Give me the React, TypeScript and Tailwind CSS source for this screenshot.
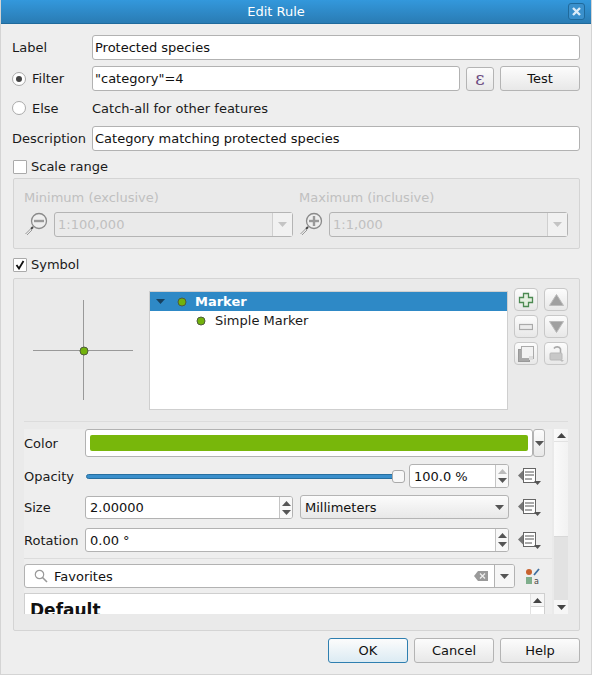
import React from 'react';

const inputCls = 'flex items-center bg-white border border-[#b2b2b2] rounded-[3px] px-[2px] text-[#111] whitespace-nowrap overflow-hidden';
const btnBase = 'flex items-center justify-center border rounded-[3px] bg-gradient-to-b from-[#fcfcfc]';
const btnCls = `${btnBase} border-[#b4b4b4] to-[#e8e8e8] text-[#111]`;

function Arrow({ down = true, color = '#555', w = 9 }: { down?: boolean; color?: string; w?: number }) {
    return (
        <svg width={w} height={5} viewBox="0 0 9 5" className="shrink-0">
            <path d={down ? 'M0 0H9L4.5 5Z' : 'M0 5H9L4.5 0Z'} fill={color} />
        </svg>
    );
}

function Spin({ upColor = '#555' }: { upColor?: string }) {
    return (
        <div className="ml-auto w-[13px] -mr-[2px] h-full border-l border-[#c4c4c4] flex flex-col items-center justify-center gap-[4px] bg-[#f8f8f8] shrink-0">
            <Arrow down={false} color={upColor} />
            <Arrow />
        </div>
    );
}

function DataDefined() {
    return (
        <svg width={24} height={20} viewBox="0 0 24 20" className="shrink-0">
            <path d="M0 9.5L6 3.5V15.5Z" fill="#777" />
            <rect x="5.5" y="2.5" width="12" height="14" fill="#fff" stroke="#666" />
            <path d="M7 6H16M7 9H16M7 13H14" stroke="#555" />
            <path d="M16 15H23L19.5 19Z" fill="#555" />
        </svg>
    );
}

function Magnifier({ plus }: { plus?: boolean }) {
    return (
        <svg width={24} height={26} viewBox="0 0 24 26" className="shrink-0">
            <circle cx="15" cy="10" r="7.5" fill="#eee" stroke="#8a8a8a" strokeWidth="1.3" />
            <path d="M10 10H20" stroke="#999" strokeWidth="2.4" />
            {plus && <path d="M15 5V15" stroke="#999" strokeWidth="2.4" />}
            <path d="M9 16L7 18" stroke="#444" strokeWidth="2" />
            <path d="M6.5 18L1.5 23M8 19L3 24" stroke="#999" />
        </svg>
    );
}

function Dot({ size = 8 }: { size?: number }) {
    return (
        <svg width={size + 2} height={size + 2} viewBox="0 0 10 10" className="shrink-0">
            <circle cx="5" cy="5" r="4" fill="#72b20c" stroke="#4f5b3d" strokeWidth="1" />
        </svg>
    );
}

function ScaleCombo({ value, plus, wrap }: { value: string; plus?: boolean; wrap: string }) {
    return (
        <div className={`flex flex-col ${wrap}`}>
            <div className="h-[15px] text-[#c0c0c0]">{plus ? 'Maximum (inclusive)' : 'Minimum (exclusive)'}</div>
            <div className="flex items-center mt-[6px] gap-[6px]">
                <Magnifier plus={plus} />
                <div className="flex-1 h-[25px] flex items-center border border-[#b4b4b4] rounded-[3px] bg-[#eaeaea] text-[#c0c0c0] pl-[3px]">
                    {value}
                    <div className="ml-auto w-[20px] h-full border-l border-[#cfcfcf] bg-[#f1f1f1] flex items-center justify-center">
                        <Arrow color="#c4c4c4" />
                    </div>
                </div>
            </div>
        </div>
    );
}

function ToolButton({ children }: { children: React.ReactNode }) {
    return (
        <div className={`${btnBase} border-[#c8c8c8] to-[#e8e8e8] w-[24px] h-[23px] rounded-[4px]`}>
            {children}
        </div>
    );
}

function Arrow2({ down }: { down?: boolean }) {
    return (
        <svg width={15} height={12} viewBox="0 0 15 12">
            <path d={down ? 'M0.5 0.5H14.5L7.5 11.5Z' : 'M0.5 11.5H14.5L7.5 0.5Z'} fill="#a0a0a0" stroke="#bbb" />
        </svg>
    );
}

export default function App() {
    return (
        <div className="w-[592px] h-[675px] bg-[#eeeeee] flex flex-col text-[13px] leading-[15px] text-[#1a1a1a] font-['DejaVu_Sans',sans-serif] border-x border-b border-[#d4d4d4] overflow-hidden">
            <div className="h-[24px] -mx-[1px] pr-[40px] shrink-0 relative flex items-center justify-center text-white bg-gradient-to-b from-[#3398dc] to-[#2a7cb4] border-b border-[#1f6a9c]">
                Edit Rule
                <div className="absolute right-[7px] top-[3px] w-[17px] h-[17px] rounded-[3px] border border-[#1f6a9c] bg-[#3a90cc] flex items-center justify-center">
                    <svg width={11} height={11} viewBox="0 0 11 11">
                        <path d="M2 2L9 9M9 2L2 9" stroke="#dcecf8" strokeWidth="2.4" />
                    </svg>
                </div>
            </div>

            <div className="flex-1 flex flex-col pl-[11px] pr-[11px] pt-[11px]">
                <div className="flex items-center h-[25px]">
                    <span className="w-[80px]">Label</span>
                    <div className={`${inputCls} flex-1 h-full`}>Protected species</div>
                </div>
                <div className="flex items-center h-[25px] mt-[6px]">
                    <span className="w-[80px] flex items-center gap-[6px]">
                        <span className="w-[14px] h-[14px] rounded-full border border-[#aaa] bg-white flex items-center justify-center">
                            <span className="w-[6px] h-[6px] rounded-full bg-[#444]" />
                        </span>
                        Filter
                    </span>
                    <div className={`${inputCls} w-[368px] h-full`}>"category"=4</div>
                    <div className={`${btnBase} border-[#b4b4b4] to-[#e8e8e8] w-[28px] h-[24px] ml-[6px] font-['DejaVu_Serif',serif] text-[18px] text-[#6b4a80]`}>ε</div>
                    <div className={`${btnCls} w-[80px] h-[25px] ml-[6px]`}>Test</div>
                </div>
                <div className="flex items-center h-[24px] mt-[5px]">
                    <span className="w-[80px] flex items-center gap-[6px]">
                        <span className="w-[14px] h-[14px] rounded-full border border-[#aaa] bg-white" />
                        Else
                    </span>
                    Catch-all for other features
                </div>
                <div className="flex items-center h-[25px] mt-[6px]">
                    <span className="w-[80px]">Description</span>
                    <div className={`${inputCls} flex-1 h-full`}>Category matching protected species</div>
                </div>

                <div className="flex items-center h-[15px] mt-[8px] ml-[1px] gap-[4px]">
                    <span className="w-[14px] h-[14px] border border-[#aaa] bg-white rounded-[1px]" />
                    Scale range
                </div>
                <div className="h-[71px] mt-[4px] ml-[1px] border border-[#d4d4d4] rounded-[2px] bg-[#eaeaea] flex pt-[11px] pl-[10px] pr-[11px]">
                    <ScaleCombo value="1:100,000" wrap="w-[269px]" />
                    <ScaleCombo value="1:1,000" plus wrap="w-[269px] ml-[6px]" />
                </div>

                <div className="flex items-center h-[15px] mt-[8px] ml-[1px] gap-[4px]">
                    <span className="w-[14px] h-[14px] border border-[#aaa] bg-white rounded-[1px] flex items-center justify-center">
                        <svg width={10} height={10} viewBox="0 0 10 10">
                            <path d="M1.5 5L4 8.5L8.5 1" stroke="#111" strokeWidth="1.8" fill="none" />
                        </svg>
                    </span>
                    Symbol
                </div>
                <div className="h-[353px] mt-[6px] ml-[1px] border border-[#d4d4d4] rounded-[2px] bg-[#eaeaea] flex flex-col pl-[10px] pr-[11px] overflow-hidden">
                    <div className="flex h-[143px] shrink-0 border-b border-[#dcdcdc]">
                        <div className="w-[125px] pl-[9px] pt-[21px] shrink-0">
                            <svg width={100} height={100} viewBox="0 0 100 100">
                                <path d="M0 50.5H100M50.5 0V100" stroke="#999" />
                                <circle cx="51" cy="51" r="4" fill="#72b20c" stroke="#4f5b3d" />
                            </svg>
                        </div>
                        <div className="w-[359px] h-[119px] mt-[12px] bg-white border border-[#cfcfcf] flex flex-col">
                            <div className="h-[19px] bg-[#2e89c6] flex items-center text-white font-bold pl-[6px]">
                                <Arrow color="#17405e" />
                                <span className="ml-[12px]"><Dot /></span>
                                <span className="ml-[8px]">Marker</span>
                            </div>
                            <div className="h-[19px] flex items-center pl-[46px] gap-[9px]">
                                <Dot />
                                Simple Marker
                            </div>
                        </div>
                        <div className="grid grid-cols-[24px_24px] grid-rows-[23px_23px_23px] gap-x-[6px] gap-y-[4px] ml-[6px] mt-[9px] h-fit">
                            <ToolButton>
                                <svg width={16} height={16} viewBox="0 0 16 16">
                                    <path d="M5.5 1.5H10.5V5.5H14.5V10.5H10.5V14.5H5.5V10.5H1.5V5.5H5.5Z" fill="#e4efe0" stroke="#4c8a52" strokeWidth="1.3" />
                                </svg>
                            </ToolButton>
                            <ToolButton><Arrow2 /></ToolButton>
                            <ToolButton>
                                <svg width={14} height={8} viewBox="0 0 14 8">
                                    <rect x="0.5" y="1.5" width="13" height="5" fill="#ececec" stroke="#aaa" strokeWidth="1.2" />
                                </svg>
                            </ToolButton>
                            <ToolButton><Arrow2 down /></ToolButton>
                            <ToolButton>
                                <svg width={16} height={16} viewBox="0 0 16 16">
                                    <rect x="0.5" y="3.5" width="11" height="12" fill="#a8a8a8" stroke="#999" />
                                    <rect x="3.5" y="0.5" width="12" height="12" fill="#f2f2f2" stroke="#aaa" />
                                    <rect x="11" y="10" width="4" height="4" fill="#ddd" />
                                </svg>
                            </ToolButton>
                            <ToolButton>
                                <svg width={17} height={17} viewBox="0 0 17 17">
                                    <path d="M6 3.5A3.5 3 0 0 1 12.5 4V8" stroke="#aaa" strokeWidth="1.6" fill="none" />
                                    <rect x="2" y="8" width="12" height="7" rx="1" fill="#c8c8c8" stroke="#b8b8b8" />
                                    <path d="M12 15L16 15L14 17Z" fill="#bbb" />
                                </svg>
                            </ToolButton>
                        </div>
                    </div>

                    <div className="flex mt-[7px] h-[185px] shrink-0">
                        <div className="w-[528px] bg-[#eeeeee] flex flex-col shrink-0 overflow-hidden">
                            <div className="flex items-center h-[28px] shrink-0">
                                <span className="w-[61px]">Color</span>
                                <div className="w-[448px] h-full bg-white border border-[#b2b2b2] rounded-[3px] px-[4px] py-[5px] shrink-0">
                                    <div className="w-full h-full bg-[#78b70b] rounded-[2px]" />
                                </div>
                                <div className={`${btnCls} w-[12px] h-full`}><Arrow /></div>
                            </div>
                            <div className="flex items-center h-[24px] mt-[7px] shrink-0">
                                <span className="w-[62px]">Opacity</span>
                                <div className="w-[319px] flex items-center shrink-0">
                                    <div className="flex-1 h-[5px] bg-[#3a8fcb] border border-[#276f9f] rounded-full" />
                                    <div className="w-[13px] h-[13px] -ml-[3px] bg-[#f8f8f8] border border-[#aaa] rounded-[3px]" />
                                </div>
                                <div className={`${inputCls} w-[100px] h-full ml-[4px] pl-[4px]`}>
                                    100.0 %
                                    <Spin upColor="#bbb" />
                                </div>
                                <span className="ml-[9px]"><DataDefined /></span>
                            </div>
                            <div className="flex items-center h-[24px] mt-[7px] shrink-0">
                                <span className="w-[61px]">Size</span>
                                <div className={`${inputCls} w-[208px] h-[23px] self-end pl-[4px]`}>
                                    2.00000
                                    <Spin />
                                </div>
                                <div className={`${btnCls} !justify-between w-[209px] h-full ml-[7px] px-[4px]`}>
                                    Millimeters
                                    <Arrow />
                                </div>
                                <span className="ml-[9px]"><DataDefined /></span>
                            </div>
                            <div className="flex items-center h-[24px] mt-[9px] shrink-0">
                                <span className="w-[61px]">Rotation</span>
                                <div className={`${inputCls} w-[424px] h-full pl-[4px]`}>
                                    0.00 °
                                    <Spin />
                                </div>
                                <span className="ml-[9px]"><DataDefined /></span>
                            </div>
                            <div className="h-px bg-[#dcdcdc] mt-[6px] shrink-0" />
                            <div className="flex items-center h-[24px] mt-[5px] shrink-0">
                                <div className={`${inputCls} w-[491px] h-full pl-[9px] gap-[6px]`}>
                                    <svg width={14} height={14} viewBox="0 0 14 14" className="shrink-0">
                                        <circle cx="5.5" cy="5.5" r="4.2" fill="none" stroke="#999" strokeWidth="1.2" />
                                        <path d="M8.5 8.5L13 13" stroke="#999" strokeWidth="1.6" />
                                    </svg>
                                    Favorites
                                    <svg width={14} height={10} viewBox="0 0 14 10" className="ml-auto shrink-0">
                                        <path d="M0 5L4 0H14V10H4Z" fill="#9a9a9a" />
                                        <path d="M6 2.5L11 7.5M11 2.5L6 7.5" stroke="#eee" strokeWidth="1.3" />
                                    </svg>
                                    <div className="w-[20px] -mr-[2px] h-full border-l border-[#b2b2b2] bg-[#f6f6f6] flex items-center justify-center shrink-0">
                                        <Arrow />
                                    </div>
                                </div>
                                <span className="ml-[10px]">
                                    <svg width={16} height={17} viewBox="0 0 16 17">
                                        <circle cx="4" cy="4" r="3" fill="#c8622e" />
                                        <rect x="1" y="9" width="6" height="7" fill="#7fae8c" />
                                        <path d="M9 7L14 1" stroke="#3f6f9f" strokeWidth="1.8" />
                                        <text x="9" y="16" fontSize="8" fill="#444">a</text>
                                    </svg>
                                </span>
                            </div>
                            <div className="w-[521px] flex-1 min-h-[21px] mt-[5px] bg-white border-x border-t border-[#cfcfcf] flex overflow-hidden">
                                <span className="pl-[5px] pt-[5px] font-bold text-[17px] leading-[22px] text-[#111]">Default</span>
                                <div className="ml-auto w-[14px] h-full border-l border-[#e2e2e2] flex flex-col shrink-0">
                                    <div className="h-[13px] bg-[#f6f6f6] border-b border-[#d4d4d4] flex items-center justify-center">
                                        <Arrow down={false} color="#444" />
                                    </div>
                                </div>
                            </div>
                        </div>
                        <div className="ml-[2px] w-[14px] flex flex-col bg-[#e2e2e2] shrink-0">
                            <div className="h-[108px] bg-gradient-to-r from-[#fafafa] to-[#f2f2f2] border-b border-[#d8d8d8]">
                                <div className="h-[13px] border-b border-[#e2e2e2] flex items-center justify-center">
                                    <Arrow down={false} color="#444" />
                                </div>
                            </div>
                            <div className="mt-auto h-[14px] bg-[#f6f6f6] flex items-center justify-center">
                                <Arrow color="#444" />
                            </div>
                        </div>
                    </div>
                </div>

                <div className="flex justify-end gap-[6px] mt-[7px]">
                    <div className={`${btnBase} border-[#2f7fb0] to-[#dcebf3] text-[#111] w-[80px] h-[25px]`}>OK</div>
                    <div className={`${btnCls} w-[80px] h-[25px]`}>Cancel</div>
                    <div className={`${btnCls} w-[80px] h-[25px]`}>Help</div>
                </div>
            </div>
        </div>
    );
}
